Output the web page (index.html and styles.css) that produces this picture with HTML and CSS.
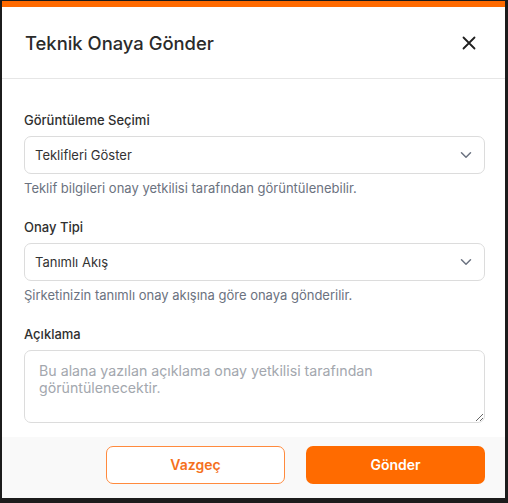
FILE: index.html
```html
<!DOCTYPE html>
<html lang="tr">
<head>
<meta charset="utf-8">
<title>Teknik Onaya Gönder</title>
<link rel="stylesheet" href="styles.css">
</head>
<body>
<div class="frame">
  <div class="modal">
    <div class="accent"></div>
    <div class="header">
      <h2 class="title">Teknik Onaya Gönder</h2>
      <button class="close" aria-label="Kapat">
        <svg width="14" height="14" viewBox="0 0 14 14"><path d="M1.5 1.5L12.5 12.5M12.5 1.5L1.5 12.5" stroke="#1f1f1f" stroke-width="1.8" stroke-linecap="round" fill="none"/></svg>
      </button>
    </div>
    <div class="body">
      <div class="field">
        <div class="label">Görüntüleme Seçimi</div>
        <div class="select">
          <span>Teklifleri Göster</span>
          <svg class="chev" width="12" height="8" viewBox="0 0 12 8"><path d="M1.5 1.8L6 6.2L10.5 1.8" stroke="#6b7280" stroke-width="1.5" fill="none" stroke-linecap="round" stroke-linejoin="round"/></svg>
        </div>
        <div class="help">Teklif bilgileri onay yetkilisi tarafından görüntülenebilir.</div>
      </div>
      <div class="field">
        <div class="label">Onay Tipi</div>
        <div class="select">
          <span>Tanımlı Akış</span>
          <svg class="chev" width="12" height="8" viewBox="0 0 12 8"><path d="M1.5 1.8L6 6.2L10.5 1.8" stroke="#6b7280" stroke-width="1.5" fill="none" stroke-linecap="round" stroke-linejoin="round"/></svg>
        </div>
        <div class="help">Şirketinizin tanımlı onay akışına göre onaya gönderilir.</div>
      </div>
      <div class="field last">
        <div class="label">Açıklama</div>
        <textarea class="textarea" placeholder="Bu alana yazılan açıklama onay yetkilisi tarafından görüntülenecektir."></textarea>
      </div>
    </div>
    <div class="footer">
      <button class="btn btn-outline">Vazgeç</button>
      <button class="btn btn-primary">Gönder</button>
    </div>
  </div>
</div>
</body>
</html>
```

FILE: styles.css
```css
* { box-sizing: border-box; }
html, body { margin: 0; padding: 0; }
body {
  background: #1c1c1c;
  font-family: Inter, "Noto Sans", "Liberation Sans", sans-serif;
}
.frame {
  width: 508px;
  height: 503px;
  padding: 1px 3px 5px 2px;
}
.modal {
  width: 503px;
  height: 497px;
  background: #ffffff;
  display: flex;
  flex-direction: column;
}
.accent {
  height: 6px;
  background: #ff6a00;
}
.header {
  height: 72px;
  border-bottom: 1px solid #e6e6e6;
  display: flex;
  align-items: center;
  justify-content: space-between;
  padding: 0 29px 0 23px;
}
.title {
  margin: 0;
  font-size: 18.4px;
  font-weight: 500;
  color: #2b2b2b;
}
.close {
  border: 0;
  background: none;
  padding: 0;
  width: 14px;
  height: 14px;
  display: flex;
  cursor: pointer;
}
.body {
  flex: 1;
  padding: 32px 20px 0 22px;
  display: flex;
  flex-direction: column;
}
.field { margin-bottom: 21px; }
.field.last { margin-bottom: 0; }
.label {
  font-size: 13px;
  line-height: 18px;
  font-weight: 500;
  color: #2f2f2f;
  margin-bottom: 7px;
}
.select {
  height: 38px;
  border: 1px solid #dcdcdc;
  border-radius: 7px;
  display: flex;
  align-items: center;
  justify-content: space-between;
  padding: 0 12px 0 10px;
  font-size: 13px;
  color: #333;
}
.chev { display: block; }
.help {
  margin-top: 5px;
  font-size: 13px;
  line-height: 18px;
  color: #6b7280;
}
.textarea {
  display: block;
  width: 100%;
  height: 73px;
  border: 1px solid #dcdcdc;
  border-radius: 7px;
  padding: 11px 14px;
  font-family: inherit;
  font-size: 14.2px;
  line-height: 17px;
  color: #333;
  resize: vertical;
  outline: none;
}
.textarea::placeholder { color: #a3a7ae; }
.footer {
  height: 61px;
  background: #f9f9f9;
  display: flex;
  justify-content: flex-end;
  align-items: center;
  gap: 21px;
  padding: 0 20px 6px 0;
}
.btn {
  width: 179px;
  height: 38px;
  border-radius: 7px;
  font-family: inherit;
  font-size: 14px;
  font-weight: 600;
  cursor: pointer;
}
.btn-outline {
  background: #ffffff;
  border: 1.5px solid #ff8a3d;
  color: #f5701c;
}
.btn-primary {
  background: #ff6b00;
  border: 0;
  color: #ffffff;
}
```
